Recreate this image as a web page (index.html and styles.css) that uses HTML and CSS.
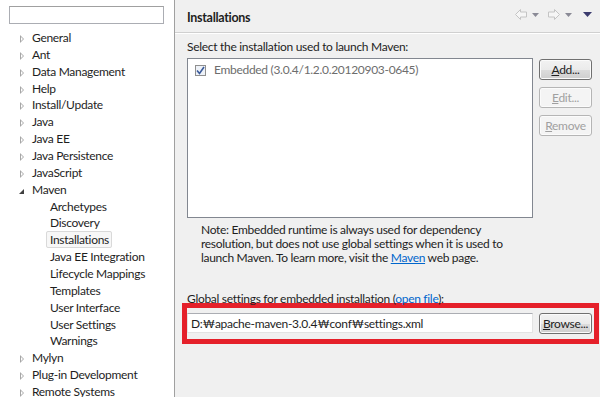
FILE: index.html
```html
<!DOCTYPE html>
<html lang="en">
<head>
    <meta charset="UTF-8">
    <title>Preferences - Maven Installations</title>
    <link rel="stylesheet" href="styles.css">
</head>
<body>
    <div class="tree-pane">
        <input type="text" class="filter">
        <ul class="tree">
            <li class="closed">General</li>
            <li class="closed">Ant</li>
            <li class="closed">Data Management</li>
            <li class="closed">Help</li>
            <li class="closed">Install/Update</li>
            <li class="closed">Java</li>
            <li class="closed">Java EE</li>
            <li class="closed">Java Persistence</li>
            <li class="closed">JavaScript</li>
            <li class="open">Maven</li>
            <li class="child">Archetypes</li>
            <li class="child">Discovery</li>
            <li class="child"><span class="selected">Installations</span></li>
            <li class="child">Java EE Integration</li>
            <li class="child">Lifecycle Mappings</li>
            <li class="child">Templates</li>
            <li class="child">User Interface</li>
            <li class="child">User Settings</li>
            <li class="child">Warnings</li>
            <li class="closed">Mylyn</li>
            <li class="closed">Plug-in Development</li>
            <li class="closed">Remote Systems</li>
        </ul>
    </div>
    <div class="page">
        <div class="page-header">
            <h1>Installations</h1>
            <div class="nav">
                <svg width="12" height="11" viewBox="0 0 12 11"><path d="M0.5 5.5 L5.5 0.5 L5.5 3 L11.5 3 L11.5 8 L5.5 8 L5.5 10.5 Z" fill="#f6f6f6" stroke="#c4c4c4"/></svg>
                <svg class="drop" width="7" height="4" viewBox="0 0 7 4"><path d="M0 0 H7 L3.5 4 Z" fill="#8a8a96"/></svg>
                <svg width="12" height="11" viewBox="0 0 12 11"><path d="M11.5 5.5 L6.5 0.5 L6.5 3 L0.5 3 L0.5 8 L6.5 8 L6.5 10.5 Z" fill="#f6f6f6" stroke="#c4c4c4"/></svg>
                <svg class="drop" width="7" height="4" viewBox="0 0 7 4"><path d="M0 0 H7 L3.5 4 Z" fill="#8a8a96"/></svg>
                <svg class="menu" width="9" height="5" viewBox="0 0 9 5"><path d="M0 0 H9 L4.5 5 Z" fill="#3b3b6e"/></svg>
            </div>
        </div>
        <div class="page-body">
            <p class="label">Select the installation used to launch Maven:</p>
            <div class="install-row">
                <div class="install-list">
                    <div class="install-item">
                        <span class="check">
                            <svg width="9" height="9" viewBox="0 0 9 9"><path d="M1 4.5 L3.5 7.5 L8 1" fill="none" stroke="#3a5a9a" stroke-width="1.6"/></svg>
                        </span>
                        Embedded (3.0.4/1.2.0.20120903-0645)
                    </div>
                </div>
                <div class="side-buttons">
                    <button class="btn"><u>A</u>dd...</button>
                    <button class="btn" disabled><u>E</u>dit...</button>
                    <button class="btn" disabled><u>R</u>emove</button>
                </div>
            </div>
            <p class="note">Note: Embedded runtime is always used for dependency resolution, but does not use global settings when it is used to launch Maven. To learn more, visit the <a href="#">Maven</a> web page.</p>
            <p class="global-label">Global settings for embedded installation (<span class="link">open file</span>):</p>
            <div class="highlight">
                <input type="text" class="path" value="D:₩apache-maven-3.0.4₩conf₩settings.xml">
                <button class="btn"><u>B</u>rowse...</button>
            </div>
        </div>
    </div>
</body>
</html>
```

FILE: styles.css
```css
body{
    margin: 0;
    width: 600px;
    height: 397px;
    overflow: hidden;
    display: flex;
    font-family: Lato, "Noto Sans CJK KR", sans-serif;
    font-size: 12px;
    letter-spacing: -0.3px;
    color: #1e1e1e;
    background-color: #f0f0f0;
}
p{
    margin: 0;
}

/* left tree */
.tree-pane{
    width: 175px;
    flex: none;
    background-color: white;
    border-right: 1px solid #a0a0a0;
    padding-top: 6px;
    box-sizing: border-box;
}
.filter{
    display: block;
    margin-left: 9px;
    width: 155px;
    height: 18px;
    box-sizing: border-box;
    border: 1px solid #abadb3;
    border-top-color: #a0a0a0;
    padding: 0;
}
.tree{
    list-style: none;
    margin: 6px 0 0 0;
    padding: 0;
}
.tree li{
    height: 16.86px;
    line-height: 16.86px;
    padding-left: 32px;
    position: relative;
    white-space: nowrap;
}
.tree li.closed::before{
    content: "";
    position: absolute;
    left: 20px;
    top: 5px;
    width: 0;
    height: 0;
    border-top: 4px solid transparent;
    border-bottom: 4px solid transparent;
    border-left: 4px solid #a6a6a6;
}
.tree li.closed::after{
    content: "";
    position: absolute;
    left: 21px;
    top: 7px;
    width: 0;
    height: 0;
    border-top: 2px solid transparent;
    border-bottom: 2px solid transparent;
    border-left: 2px solid white;
}
.tree li.open::before{
    content: "";
    position: absolute;
    left: 19px;
    top: 7px;
    width: 0;
    height: 0;
    border-left: 5px solid transparent;
    border-bottom: 5px solid #404040;
}
.tree li.child{
    padding-left: 50px;
}
.selected{
    margin-left: -4px;
    padding: 0 2px 0 3px;
    border: 1px solid #d9d9d9;
    border-radius: 2px;
    background-color: #f7f7f7;
}

/* right page */
.page{
    flex: 1;
    min-width: 0;
}
.page-header{
    height: 33px;
    border-bottom: 1px solid #d0d0d0;
    box-shadow: 0 1px 0 white;
    display: flex;
    align-items: center;
    padding: 2px 8px 0 12px;
    box-sizing: border-box;
}
.page-header h1{
    margin: 0;
    font-size: 12.5px;
    font-weight: bold;
    flex: 1;
}
.nav{
    display: flex;
    align-items: center;
    gap: 5px;
    margin-top: -5px;
}
.nav .drop{
    margin-right: 4px;
}
.nav .menu{
    margin-left: 2px;
}
.page-body{
    padding: 6px 8px 0 12px;
}
.label{
    line-height: 16px;
}
.install-row{
    display: flex;
    gap: 6px;
    margin-top: 3px;
}
.install-list{
    flex: 1;
    height: 160px;
    box-sizing: border-box;
    border: 1px solid #828790;
    background-color: white;
}
.install-item{
    display: flex;
    align-items: center;
    gap: 8px;
    color: #6d6d6d;
    padding: 3px 0 0 7px;
    line-height: 16px;
}
.check{
    width: 11px;
    height: 11px;
    box-sizing: border-box;
    border: 1px solid #8f8f8f;
    background-color: #eef2f8;
    display: flex;
    align-items: center;
    justify-content: center;
}
.side-buttons{
    width: 53px;
    display: flex;
    flex-direction: column;
    gap: 7px;
    padding-top: 1px;
}
.btn{
    width: 53px;
    height: 21px;
    padding: 0;
    font-family: inherit;
    font-size: 12px;
    letter-spacing: -0.3px;
    color: #1e1e1e;
    border: 1px solid #707070;
    border-radius: 3px;
    background: linear-gradient(#f2f2f2 0%, #ebebeb 50%, #dddddd 51%, #cfcfcf 100%);
    box-shadow: inset 0 0 0 1px #fbfbfb;
}
.btn:disabled{
    color: #a0a0a0;
    border-color: #b5b5b5;
    background: #f4f4f4;
}
.note{
    margin: 5px 0 0 14px;
    width: 320px;
    line-height: 14px;
}
.note a{
    color: #0066cc;
}
.global-label{
    margin-top: 26px;
    line-height: 16px;
}
.link{
    color: #0066cc;
}
.highlight{
    margin: -4px -7px 0 -5px;
    border: 5px solid #e5202a;
    padding: 5px 2px 5px 0;
    display: flex;
    gap: 6px;
    align-items: flex-start;
}
.path{
    flex: 1;
    min-width: 0;
    height: 20px;
    box-sizing: border-box;
    border: 1px solid #e3e3e3;
    border-top-color: #abadb3;
    padding: 0 3px;
    font-family: inherit;
    font-size: 12px;
    letter-spacing: -0.3px;
    color: #1e1e1e;
}
```
